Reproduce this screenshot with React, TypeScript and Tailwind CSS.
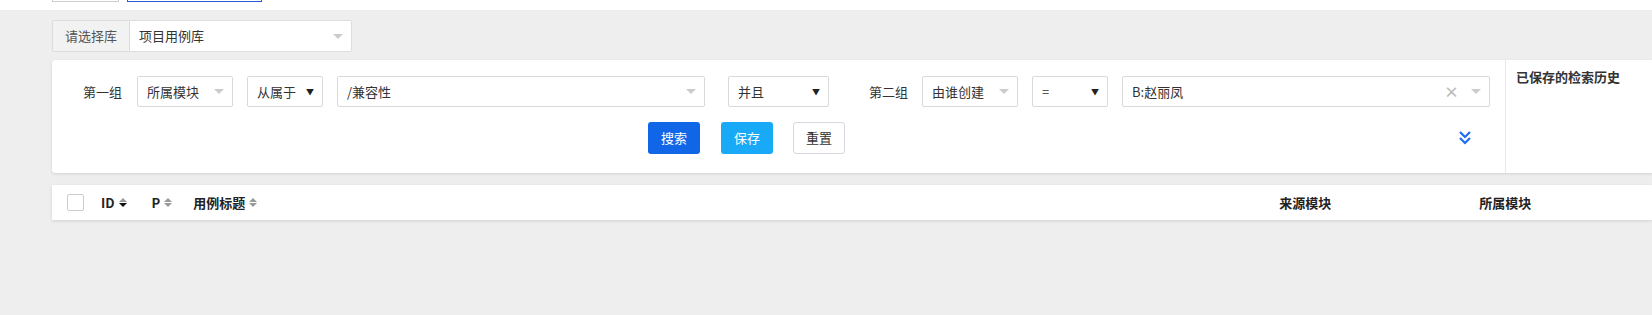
import React from "react";

const font = { fontFamily: '"Noto Sans CJK SC", "Noto Sans", sans-serif' };

function Caret({ dark }: { dark?: boolean }) {
  return dark ? (
    <span className="text-[8px] leading-none text-[#222]">▼</span>
  ) : (
    <span className="inline-block w-0 h-0 border-x-[5px] border-x-transparent border-t-[5px] border-t-[#ccc]" />
  );
}

function Field({
  width,
  text,
  dark,
  clear,
}: {
  width: string;
  text: string;
  dark?: boolean;
  clear?: boolean;
}) {
  return (
    <div
      className={`${width} h-[31px] flex items-center justify-between pl-[9px] pr-[8px] bg-white border border-[#d9d9d9] rounded-[2px] text-[13px] text-[#333]`}
    >
      <span>{text}</span>
      <span className="flex items-center gap-[12px]">
        {clear && <span className="text-[15px] leading-none font-bold text-[#bbb]">×</span>}
        <Caret dark={dark} />
      </span>
    </div>
  );
}

function SortIcon({ active }: { active?: boolean }) {
  return (
    <span className="inline-flex flex-col gap-[1px] ml-[4px]">
      <span className="w-0 h-0 border-x-[4px] border-x-transparent border-b-[4px] border-b-[#999]" />
      <span
        className={`w-0 h-0 border-x-[4px] border-x-transparent border-t-[4px] ${
          active ? "border-t-[#111]" : "border-t-[#999]"
        }`}
      />
    </span>
  );
}

export default function App() {
  return (
    <div className="w-full h-[315px] bg-[#eeeeee] overflow-hidden" style={font}>
      {/* cut-off inputs of the bar above */}
      <div className="h-[10px] bg-white flex items-start pl-[52px] gap-[8px]">
        <div className="w-[67px] h-[2px] border-x border-b border-[#ccc]" />
        <div className="w-[135px] h-[2px] border-x border-b border-[#2a5bd7]" />
      </div>

      {/* library picker */}
      <div className="mt-[10px] ml-[52px] w-[300px] h-[32px] flex border border-[#ddd] rounded-[2px] text-[13px]">
        <div className="w-[77px] flex items-center justify-center bg-[#f2f2f2] border-r border-[#ddd] text-[#555]">
          请选择库
        </div>
        <div className="flex-1 flex items-center justify-between bg-white pl-[9px] pr-[8px] text-[#333]">
          <span>项目用例库</span>
          <Caret />
        </div>
      </div>

      {/* search panel */}
      <div className="mt-[8px] ml-[52px] h-[113px] flex bg-white rounded-l-[3px] shadow-[0_1px_3px_rgba(0,0,0,0.12)]">
        <div className="w-[1453px] flex flex-col pt-[16px]">
          <div className="flex items-center text-[13px] text-[#333]">
            <span className="ml-[31px] mr-[15px]">第一组</span>
            <Field width="w-[96px]" text="所属模块" />
            <div className="w-[14px]" />
            <Field width="w-[76px]" text="从属于" dark />
            <div className="w-[14px]" />
            <Field width="w-[368px]" text="/兼容性" />
            <div className="w-[23px]" />
            <Field width="w-[101px]" text="并且" dark />
            <span className="ml-[40px] mr-[14px]">第二组</span>
            <Field width="w-[96px]" text="由谁创建" />
            <div className="w-[14px]" />
            <Field width="w-[76px]" text="=" dark />
            <div className="w-[14px]" />
            <Field width="w-[368px]" text="B:赵丽凤" clear />
          </div>
          <div className="mt-[15px] flex items-center text-[13px]">
            <button className="ml-[596px] w-[52px] h-[32px] rounded-[3px] bg-[#1166e8] text-white">
              搜索
            </button>
            <button className="ml-[21px] w-[52px] h-[32px] rounded-[3px] bg-[#18aaf6] text-white">
              保存
            </button>
            <button className="ml-[20px] w-[52px] h-[32px] rounded-[3px] bg-white border border-[#d5d8de] text-[#333]">
              重置
            </button>
            <svg className="ml-[613px]" width="14" height="16" viewBox="0 0 14 16" fill="none">
              <path d="M2 2l5 5 5-5M2 8l5 5 5-5" stroke="#1e6cf0" strokeWidth="2.2" />
            </svg>
          </div>
        </div>
        <div className="flex-1 border-l border-[#e8e8e8] pl-[10px] pt-[3px]">
          <span className="text-[13px] font-bold text-[#333]">已保存的检索历史</span>
        </div>
      </div>

      {/* table header */}
      <div className="mt-[12px] ml-[52px] h-[35px] flex items-center bg-white shadow-[0_1px_3px_rgba(0,0,0,0.12)] text-[13px] font-bold text-[#222]">
        <span className="ml-[15px] w-[17px] h-[17px] border border-[#ccc] rounded-[2px] bg-white" />
        <span className="ml-[17px] flex items-center">
          ID
          <SortIcon active />
        </span>
        <span className="ml-[25px] flex items-center">
          P
          <SortIcon />
        </span>
        <span className="ml-[21px] flex items-center">
          用例标题
          <SortIcon />
        </span>
        <span className="ml-[1022px]">来源模块</span>
        <span className="ml-[148px]">所属模块</span>
      </div>
    </div>
  );
}
